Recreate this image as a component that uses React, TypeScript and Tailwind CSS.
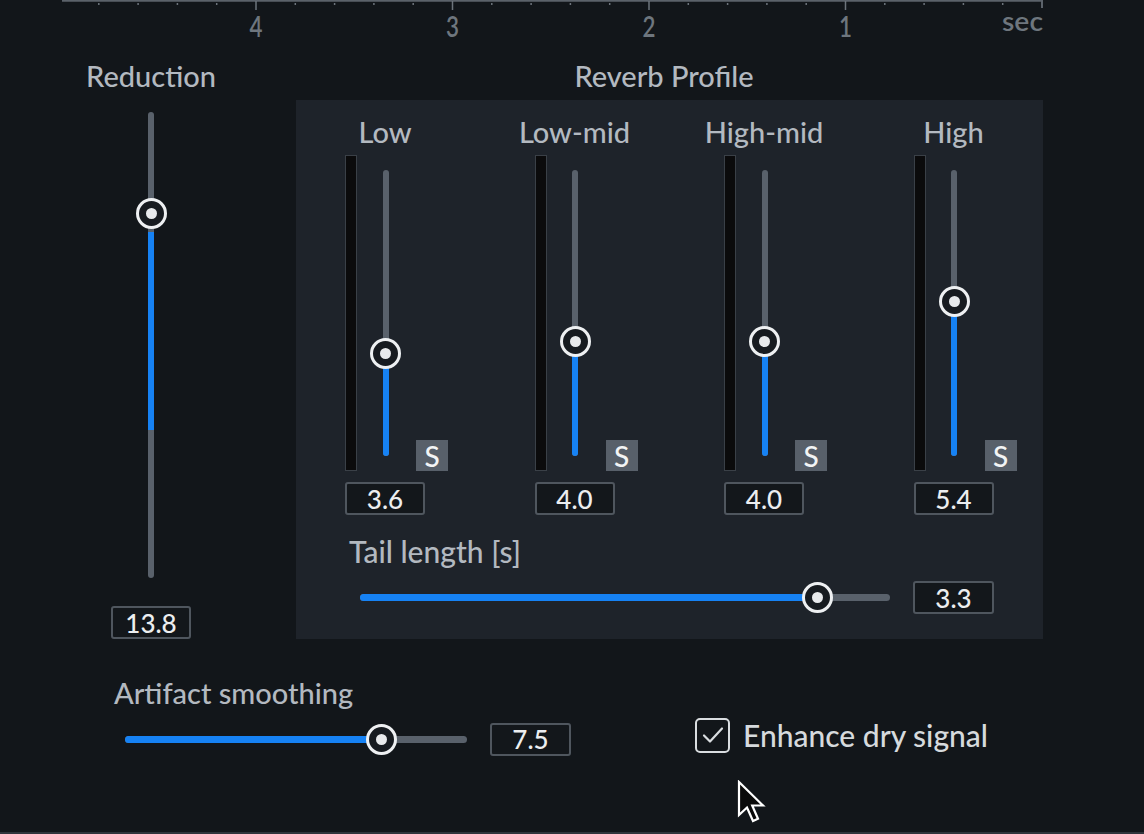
import React from "react";

const FONT = { fontFamily: "Lato, 'Open Sans', sans-serif" };

function Thumb() {
  return (
    <div className="w-[31px] h-[31px] rounded-full border-[3px] border-[#eef0f2] bg-[#171b20] flex items-center justify-center">
      <div className="w-[11px] h-[11px] rounded-full bg-[#e8eaec]" />
    </div>
  );
}

function ValueBox({ v, w = "w-[80px]" }: { v: string; w?: string }) {
  return (
    <div
      className={`${w} h-[33px] rounded-[3px] border-2 border-[#4f565e] bg-[#13171b] flex items-center justify-center text-[26px] font-medium text-[#eceef0] leading-none`}
    >
      {v}
    </div>
  );
}

function VSlider({ frac, height }: { frac: number; height: number }) {
  const thumbY = height * (1 - frac);
  return (
    <div className="relative w-[31px]" style={{ height }}>
      <div className="absolute left-[12.5px] top-0 bottom-0 w-[6px] rounded-full bg-[#59616b]" />
      <div
        className="absolute left-[12.5px] bottom-0 w-[6px] rounded-full bg-[#1682f4]"
        style={{ top: thumbY }}
      />
      <div className="absolute left-0" style={{ top: thumbY - 15.5 }}>
        <Thumb />
      </div>
    </div>
  );
}

function Band({ name, value, frac }: { name: string; value: string; frac: number }) {
  return (
    <div className="w-[189.5px] flex flex-col items-start shrink-0">
      <div className="w-[80px] h-[32px] leading-[32px] text-center text-[29px] font-medium text-[#b3b9c0] whitespace-nowrap flex justify-center">
        {name}
      </div>
      <div className="mt-[7px] h-[316px] flex items-stretch">
        <div className="w-[12px] bg-[#0b0b0c] border border-[#3a4047]" />
        <div className="ml-[13px] pt-[15px]">
          <VSlider frac={frac} height={286} />
        </div>
        <div className="ml-[15px] self-end w-[32px] h-[31px] bg-[#58606a] flex items-center justify-center text-[28px] font-medium text-[#f2f4f5] leading-none">
          S
        </div>
      </div>
      <div className="mt-[11px]">
        <ValueBox v={value} />
      </div>
    </div>
  );
}

function HSlider({ width, frac }: { width: number; frac: number }) {
  const x = width * frac;
  return (
    <div className="relative h-[31px]" style={{ width }}>
      <div className="absolute left-0 right-0 top-[12px] h-[7px] rounded-full bg-[#59616b]" />
      <div className="absolute left-0 top-[12px] h-[7px] rounded-full bg-[#1682f4]" style={{ width: x }} />
      <div className="absolute top-0" style={{ left: x - 15.5 }}>
        <Thumb />
      </div>
    </div>
  );
}

function Ruler() {
  const ticks: { x: number; major: boolean }[] = [];
  const step = 196.5 / 5;
  for (let k = -4; k <= 20; k++) {
    const x = 256 + k * step;
    if (x < 62 || x > 1043) continue;
    ticks.push({ x, major: k % 5 === 0 && k >= 0 && k < 20 });
  }
  const labels = [
    { x: 256, t: "4" },
    { x: 452.5, t: "3" },
    { x: 649, t: "2" },
    { x: 845.5, t: "1" },
  ];
  return (
    <svg width="1144" height="60" className="block">
      <line x1="62" y1="0.5" x2="1042" y2="0.5" stroke="#5b626a" strokeWidth="2.5" />
      {ticks.map((t, i) => (
        <line
          key={i}
          x1={t.x}
          x2={t.x}
          y1={t.major ? 1 : 3}
          y2={t.major ? 10 : 5}
          stroke="#6d747c"
          strokeWidth="1.5"
        />
      ))}
      <line x1="1042" y1="0" x2="1042" y2="8" stroke="#5b626a" strokeWidth="2" />
      {labels.map((l) => (
        <text
          key={l.t}
          x={l.x}
          y="37"
          textAnchor="middle"
          fontFamily="Lato, sans-serif"
          fontSize="28"
          fontWeight="600"
          fill="#6e767e"
          textLength="13"
          lengthAdjust="spacingAndGlyphs"
        >
          {l.t}
        </text>
      ))}
      <text
        x="1002"
        y="31"
        fontFamily="Lato, sans-serif"
        fontSize="26"
        fontWeight="600"
        fill="#6e767e"
        textLength="41"
        lengthAdjust="spacingAndGlyphs"
      >
        sec
      </text>
    </svg>
  );
}

export default function App() {
  return (
    <div className="w-[1144px] h-[834px] bg-[#12161a] relative overflow-hidden flex flex-col" style={FONT}>
      <Ruler />
      <div className="flex">
        {/* Reduction */}
        <div className="ml-[51px] w-[200px] flex flex-col items-center">
          <div className="h-[32px] leading-[32px] text-[29px] font-medium text-[#b3b9c0]">Reduction</div>
          <div className="mt-[20px] relative w-[31px] h-[466px]">
            <div className="absolute left-[12.5px] top-0 bottom-0 w-[6px] rounded-full bg-[#59616b]" />
            <div className="absolute left-[12.5px] top-[120px] h-[198px] w-[6px] bg-[#1682f4]" />
            <div className="absolute left-0 top-[85.5px]">
              <Thumb />
            </div>
          </div>
          <div className="mt-[28px]">
            <ValueBox v="13.8" />
          </div>
        </div>
        {/* Reverb profile */}
        <div className="ml-[45px] w-[747px] flex flex-col">
          <div className="h-[32px] leading-[32px] text-center pr-[11px] text-[29px] font-medium text-[#b3b9c0]">
            Reverb Profile
          </div>
          <div className="mt-[8px] h-[539px] bg-[#1e232a] flex flex-col">
            <div className="pt-[16px] pl-[49px] flex">
              <Band name="Low" value="3.6" frac={0.36} />
              <Band name="Low-mid" value="4.0" frac={0.4} />
              <Band name="High-mid" value="4.0" frac={0.4} />
              <Band name="High" value="5.4" frac={0.54} />
            </div>
            <div className="mt-[20px] pl-[53px] h-[32px] leading-[32px] text-[30px] font-medium text-[#b3b9c0]">
              Tail length [s]
            </div>
            <div className="mt-[14px] pl-[64px] flex items-center">
              <HSlider width={530} frac={0.864} />
              <div className="ml-[23px]">
                <ValueBox v="3.3" w="w-[81px]" />
              </div>
            </div>
          </div>
        </div>
      </div>
      {/* Bottom */}
      <div className="mt-[38px] pl-[114px] h-[32px] leading-[32px] text-[29px] font-medium text-[#b3b9c0]">
        Artifact smoothing
      </div>
      <div className="mt-[13px] flex items-center h-[34px]">
        <div className="ml-[125px]">
          <HSlider width={342} frac={0.751} />
        </div>
        <div className="ml-[23px]">
          <ValueBox v="7.5" w="w-[81px]" />
        </div>
        <div className="ml-[124px] mb-[8px] flex items-center">
          <div className="w-[35px] h-[35px] rounded-[5px] border-[2.5px] border-[#d9dde0] flex items-center justify-center">
            <svg width="22" height="18" viewBox="0 0 22 18">
              <path d="M2 9.5 L8 15.5 L20 2.5" fill="none" stroke="#d9dde0" strokeWidth="2.2" strokeLinecap="round" strokeLinejoin="round" />
            </svg>
          </div>
          <div className="ml-[13px] text-[30px] font-medium leading-[32px] text-[#d6dadd]">Enhance dry signal</div>
        </div>
      </div>
      <div className="absolute left-0 right-0 bottom-0 h-[2px] bg-[#2e343b]" />
      {/* cursor */}
      <svg className="absolute left-[737px] top-[780px]" width="30" height="44" viewBox="0 0 30 44">
        <path
          d="M2 2 L2 35 L10 27.5 L16 41 L21 38.8 L15.2 25.5 L26 25.5 Z"
          fill="#0a0a0a"
          stroke="#ffffff"
          strokeWidth="2.2"
          strokeLinejoin="miter"
        />
      </svg>
    </div>
  );
}
